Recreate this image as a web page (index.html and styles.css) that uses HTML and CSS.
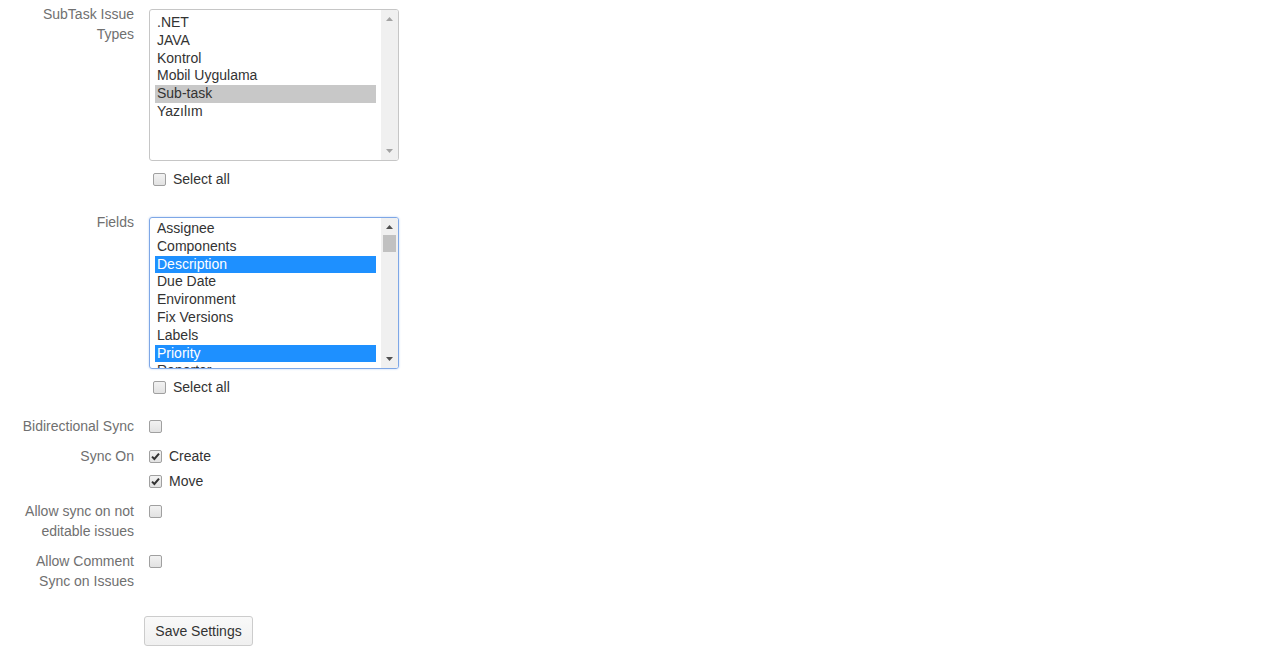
FILE: index.html
```html
<!DOCTYPE html>
<html lang="en">
<head>
    <meta charset="UTF-8">
    <title>Sync Settings</title>
    <link rel="stylesheet" href="styles.css">
</head>
<body>
    <form class="settings">
        <div class="field field-list">
            <label class="field-label">SubTask Issue Types</label>
            <div class="field-control">
                <div class="listbox">
                    <ul class="options">
                        <li>.NET</li>
                        <li>JAVA</li>
                        <li>Kontrol</li>
                        <li>Mobil Uygulama</li>
                        <li class="selected-idle">Sub-task</li>
                        <li>Yazılım</li>
                    </ul>
                    <div class="scrollbar disabled">
                        <svg class="arrow" width="17" height="17" viewBox="0 0 17 17"><polygon points="5,11 12,11 8.5,7"/></svg>
                        <div class="track"></div>
                        <svg class="arrow" width="17" height="17" viewBox="0 0 17 17"><polygon points="5,6 12,6 8.5,10"/></svg>
                    </div>
                </div>
                <div class="check select-all">
                    <span class="box"></span>
                    <span>Select all</span>
                </div>
            </div>
        </div>

        <div class="field field-list second">
            <label class="field-label">Fields</label>
            <div class="field-control">
                <div class="listbox focused">
                    <ul class="options scrolled">
                        <li>Assignee</li>
                        <li>Components</li>
                        <li class="selected">Description</li>
                        <li>Due Date</li>
                        <li>Environment</li>
                        <li>Fix Versions</li>
                        <li>Labels</li>
                        <li class="selected">Priority</li>
                        <li>Reporter</li>
                    </ul>
                    <div class="scrollbar">
                        <svg class="arrow" width="17" height="17" viewBox="0 0 17 17"><polygon points="5,11 12,11 8.5,7"/></svg>
                        <div class="track"><div class="thumb"></div></div>
                        <svg class="arrow" width="17" height="17" viewBox="0 0 17 17"><polygon points="5,6 12,6 8.5,10"/></svg>
                    </div>
                </div>
                <div class="check select-all">
                    <span class="box"></span>
                    <span>Select all</span>
                </div>
            </div>
        </div>

        <div class="field">
            <label class="field-label">Bidirectional Sync</label>
            <div class="field-control">
                <div class="check"><span class="box"></span></div>
            </div>
        </div>

        <div class="field">
            <label class="field-label">Sync On</label>
            <div class="field-control">
                <div class="check">
                    <span class="box checked"><svg width="11" height="11" viewBox="0 0 11 11"><path d="M2 5.6 L4.4 8 L9 2.6"/></svg></span>
                    <span>Create</span>
                </div>
                <div class="check stacked">
                    <span class="box checked"><svg width="11" height="11" viewBox="0 0 11 11"><path d="M2 5.6 L4.4 8 L9 2.6"/></svg></span>
                    <span>Move</span>
                </div>
            </div>
        </div>

        <div class="field">
            <label class="field-label">Allow sync on not editable issues</label>
            <div class="field-control">
                <div class="check"><span class="box"></span></div>
            </div>
        </div>

        <div class="field">
            <label class="field-label">Allow Comment Sync on Issues</label>
            <div class="field-control">
                <div class="check"><span class="box"></span></div>
            </div>
        </div>

        <div class="actions">
            <button type="button" class="button">Save Settings</button>
        </div>
    </form>
</body>
</html>
```

FILE: styles.css
```css
html, body {
    margin: 0;
    background-color: #ffffff;
    font-family: 'Liberation Sans', Arial, sans-serif;
    font-size: 14px;
    color: #333333;
}
.settings {
    padding-top: 4px;
}
.field {
    display: grid;
    grid-template-columns: 120px 250px;
    column-gap: 15px;
    padding-left: 14px;
    margin-bottom: 10px;
}
.field-list {
    margin-bottom: 23px;
}
.field-list.second {
    margin-bottom: 19px;
}
.field-label {
    text-align: right;
    line-height: 20px;
    color: #707070;
}
.listbox {
    margin-top: 5px;
    height: 152px;
    box-sizing: border-box;
    border: 1px solid #c6c6c6;
    border-radius: 3px;
    display: flex;
    overflow: hidden;
}
.listbox.focused {
    border-color: #7ea7e6;
    box-shadow: 0 0 2px rgba(80, 140, 230, 0.45);
}
.options {
    flex: 1;
    list-style: none;
    margin: 0;
    padding: 4px 5px 0 5px;
    overflow: hidden;
}
.options.scrolled {
    margin-top: -2px;
}
.options li {
    line-height: 17.8px;
    height: 17.8px;
    padding-left: 2px;
    white-space: nowrap;
}
.options .selected-idle {
    background-color: #c8c8c8;
}
.options .selected {
    background-color: #1e90ff;
    color: #ffffff;
}
.scrollbar {
    width: 17px;
    background-color: #f0f0f0;
    display: flex;
    flex-direction: column;
}
.scrollbar .arrow {
    display: block;
    fill: #505050;
}
.scrollbar.disabled .arrow {
    fill: #a3a3a3;
}
.scrollbar .track {
    flex: 1;
}
.scrollbar .thumb {
    margin: 0 2px;
    height: 17px;
    background-color: #c1c1c1;
}
.check {
    display: flex;
    align-items: center;
    height: 20px;
    line-height: 20px;
}
.check.stacked {
    margin-top: 5px;
}
.select-all {
    margin-top: 8px;
    padding-left: 4px;
}
.box {
    width: 11px;
    height: 11px;
    border: 1px solid #a0a0a0;
    border-radius: 2px;
    background: linear-gradient(#f2f2f2, #e2e2e2);
    margin-right: 7px;
    display: flex;
    align-items: center;
    justify-content: center;
}
.box svg path {
    fill: none;
    stroke: #333333;
    stroke-width: 2;
}
.actions {
    padding-left: 144px;
    margin-top: 25px;
}
.button {
    font-family: 'Liberation Sans', Arial, sans-serif;
    font-size: 14px;
    color: #333333;
    width: 109px;
    height: 30px;
    padding: 0;
    background: linear-gradient(#f9f9f9, #f0f0f0);
    border: 1px solid #cccccc;
    border-radius: 3px;
}
```
